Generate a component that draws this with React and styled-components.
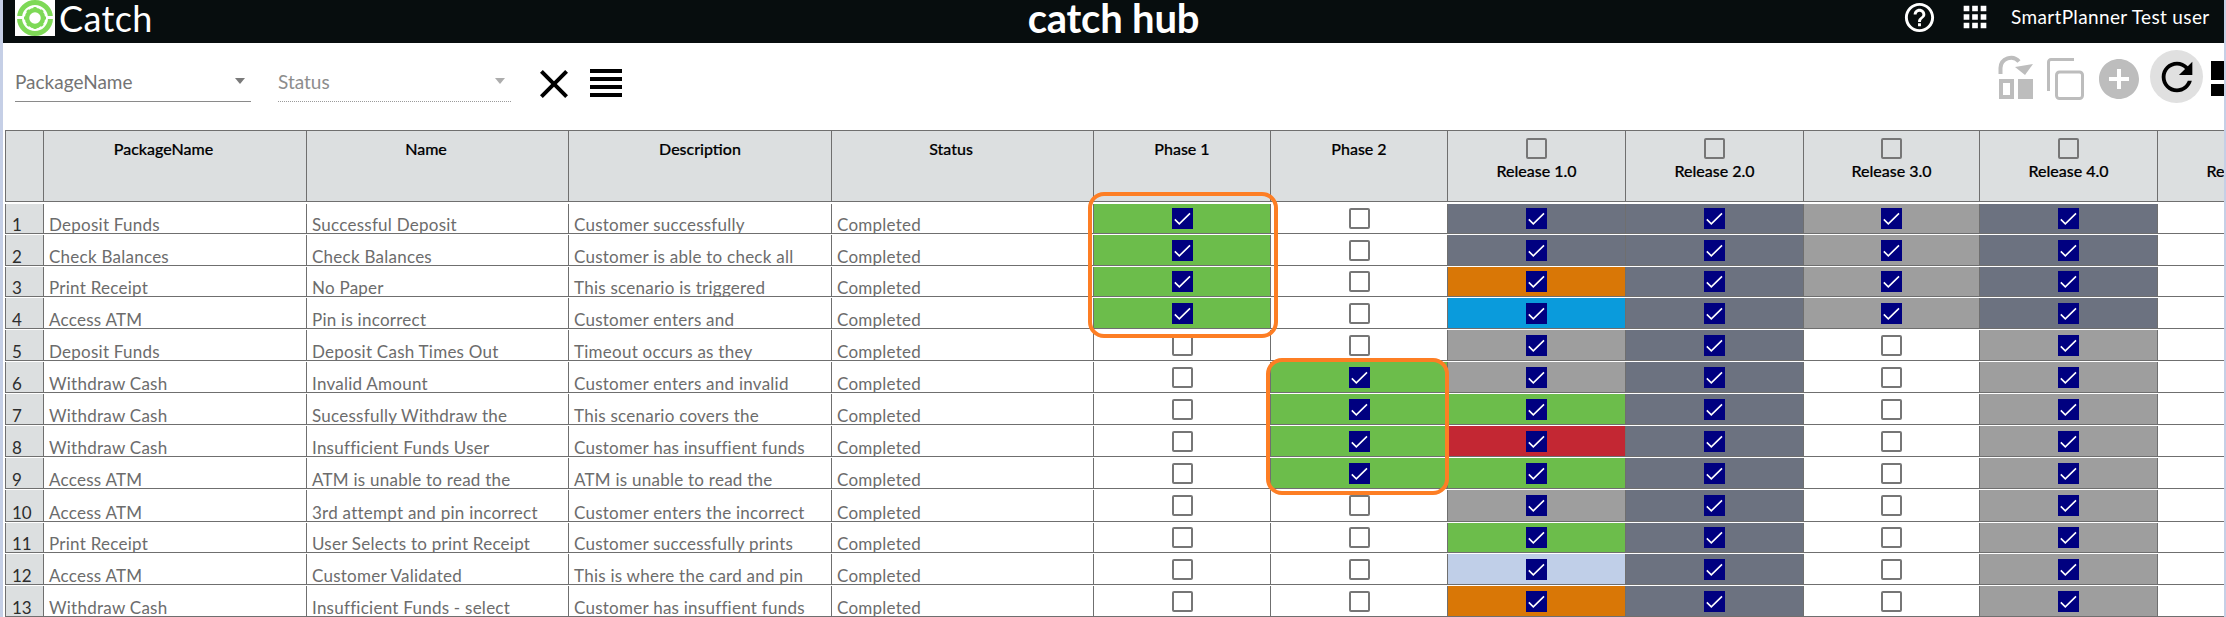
import React from "react";
import styled, { createGlobalStyle } from "styled-components";

const Global = createGlobalStyle`
  html, body { margin: 0; padding: 0; background: #c5cfe6; overflow: hidden; }
  * { box-sizing: border-box; }
`;

const FONT = `"Lato", "Noto Sans", sans-serif`;

const Page = styled.div`
  margin: 0 2px 0 3px;
  width: 2221px;
  height: 617px;
  background: #fff;
  overflow: hidden;
  font-family: ${FONT};
`;

const TopBar = styled.header`
  height: 43px;
  background: #070d0e;
  color: #fff;
  display: grid;
  grid-template-columns: 1fr auto 1fr;
  align-items: start;
  padding-left: 12px;
  overflow: hidden;
`;
const Brand = styled.div`
  display: flex;
  align-items: flex-start;
`;
const BrandName = styled.span`
  font-size: 36px;
  line-height: 36px;
  margin-left: 4px;
  letter-spacing: 0.4px;
`;
const HubTitle = styled.span`
  font-size: 40px;
  line-height: 36px;
  font-weight: 700;
  margin-left: -12px;
  letter-spacing: -0.2px;
`;
const TopActions = styled.div`
  display: flex;
  justify-content: flex-end;
  align-items: flex-start;
`;
const UserName = styled.span`
  font-size: 19px;
  line-height: 34px;
  white-space: nowrap;
  margin-left: 19px;
  width: 213px;
  overflow: hidden;
  letter-spacing: 0.35px;
`;

const Toolbar = styled.div`
  height: 87px;
  display: flex;
  align-items: flex-start;
  padding-left: 12px;
`;
const SelectBox = styled.div`
  width: ${(p) => p.$w}px;
  margin-right: ${(p) => p.$mr}px;
  margin-top: 25px;
  height: 34px;
  display: flex;
  align-items: flex-start;
  justify-content: space-between;
  padding-right: 6px;
  border-bottom: 1px ${(p) => (p.$disabled ? "dotted #9a9a9a" : "solid #8a8a8a")};
  color: ${(p) => (p.$disabled ? "#8d8d8d" : "#747474")};
  font-size: 19px;
  line-height: 28px;
`;
const Arrow = styled.span`
  width: 0;
  height: 0;
  margin-top: 10px;
  border-left: 5px solid transparent;
  border-right: 5px solid transparent;
  border-top: 6px solid ${(p) => (p.$disabled ? "#adadad" : "#7a7a7a")};
`;
const ToolIcon = styled.svg`
  flex: none;
  margin-top: ${(p) => p.$mt}px;
  margin-left: ${(p) => p.$ml || 0}px;
  fill: ${(p) => p.$color || "#000"};
`;
const RightTools = styled.div`
  margin-left: auto;
  display: flex;
  align-items: flex-start;
`;
const RefreshButton = styled.div`
  width: 53px;
  height: 53px;
  margin: 7px 0 0 7px;
  border-radius: 50%;
  background: #e0e0e0;
  display: flex;
  align-items: center;
  justify-content: center;
`;

const Table = styled.div`
  position: relative;
  margin-left: 2px;
  width: 2219px;
  overflow: hidden;
  height: 487px;
`;
const COLS = "38px 263px 262px 263px 262px 177px 177px 178px 178px 176px 178px 178px";
const HeaderRow = styled.div`
  display: grid;
  grid-template-columns: ${COLS};
  width: 2530px;
  height: 72px;
  border-top: 1px solid #6f6f6f;
  border-bottom: 1px solid #6f6f6f;
  background: #dcdfe0;
`;
const HeaderCell = styled.div`
  border-left: 1px solid #6f6f6f;
  display: flex;
  flex-direction: column;
  align-items: center;
  padding-top: ${(p) => (p.$box ? 7 : 8)}px;
  padding-right: ${(p) => p.$shift || 0}px;
  color: #000;
  font-size: 16px;
  line-height: 20px;
  font-weight: 500;
  -webkit-text-stroke: 0.2px #000;
  white-space: nowrap;
`;
const HeaderLabel = styled.span`
  margin-top: ${(p) => (p.$box ? 2 : 0)}px;
`;
const Row = styled.div`
  display: grid;
  grid-template-columns: ${COLS};
  width: 2530px;
  height: ${(p) => p.$h}px;
  padding-top: 1px;
  border-bottom: 1px solid #6f6f6f;
  &:nth-child(2) { padding-top: 2px; }
`;
const IndexCell = styled.div`
  border-left: 1px solid #6f6f6f;
  background: #dcdfe0;
  color: #2d2d2d;
  font-size: 17px;
  line-height: 17px;
  padding-left: 6px;
  display: flex;
  align-items: flex-end;
  overflow: hidden;
`;
const TextCell = styled.div`
  border-left: 1px solid #6f6f6f;
  color: #6c6c6c;
  font-size: 17px;
  line-height: 17px;
  letter-spacing: 0.25px;
  padding-left: 5px;
  display: flex;
  align-items: flex-end;
  white-space: nowrap;
  overflow: hidden;
`;
const MarkCell = styled.div`
  border-left: 1px solid #6f6f6f;
  background: ${(p) => p.$bg || "#fff"};
  display: flex;
  align-items: center;
  justify-content: center;
`;
const Box = styled.span`
  width: 21px;
  height: 21px;
  flex: none;
  border-radius: 2px;
  border: 2px solid #767676;
  background: transparent;
`;
const Checked = styled.span`
  width: 21px;
  height: 21px;
  flex: none;
  background: #000080;
  display: block;
  line-height: 0;
`;
const Highlight = styled.div`
  position: absolute;
  left: ${(p) => p.$x}px;
  top: ${(p) => p.$y}px;
  width: ${(p) => p.$w}px;
  height: ${(p) => p.$h}px;
  border: 4px solid #fd7e24;
  border-radius: 16px;
  pointer-events: none;
`;

const SLATE = "#6c7280", GRAY = "#9e9e9e", GREEN = "#6cbd4b", ORANGE = "#d97706", BLUE = "#0a9bdc", RED = "#c32733", LIGHT = "#c0cfe8";
const HEIGHTS = [32, 32, 31, 32, 32, 32, 32, 32, 32, 33, 31, 32, 32];
const R1 = [SLATE, SLATE, ORANGE, BLUE, GRAY, GRAY, GREEN, RED, GREEN, GRAY, GREEN, LIGHT, ORANGE];

const ROWS = [
  ["Deposit Funds", "Successful Deposit", "Customer successfully"],
  ["Check Balances", "Check Balances", "Customer is able to check all"],
  ["Print Receipt", "No Paper", "This scenario is triggered"],
  ["Access ATM", "Pin is incorrect", "Customer enters and"],
  ["Deposit Funds", "Deposit Cash Times Out", "Timeout occurs as they"],
  ["Withdraw Cash", "Invalid Amount", "Customer enters and invalid"],
  ["Withdraw Cash", "Sucessfully Withdraw the", "This scenario covers the"],
  ["Withdraw Cash", "Insufficient Funds User", "Customer has insuffient funds"],
  ["Access ATM", "ATM is unable to read the", "ATM is unable to read the"],
  ["Access ATM", "3rd attempt and pin incorrect", "Customer enters the incorrect"],
  ["Print Receipt", "User Selects to print Receipt", "Customer successfully prints"],
  ["Access ATM", "Customer Validated", "This is where the card and pin"],
  ["Withdraw Cash", "Insufficient Funds - select", "Customer has insuffient funds"],
];

const Mark = ({ on, bg }) => (
  <MarkCell $bg={bg}>
    {on ? (
      <Checked>
        <svg width="21" height="21" viewBox="0 0 21 21">
          <path d="M2.8 11.4 7.3 15.8 18 5.4" fill="none" stroke="#fff" strokeWidth="1.6" />
        </svg>
      </Checked>
    ) : (
      <Box />
    )}
  </MarkCell>
);

const Logo = () => (
  <svg width="40" height="36" viewBox="0 0 40 36" style={{ flex: "none", display: "block" }}>
    <rect width="40" height="36" fill="#fff" />
    <circle cx="20" cy="18" r="15.5" fill="none" stroke="#7ed957" strokeWidth="5" />
    <rect x="0" y="16" width="8" height="3" fill="#fff" />
    <rect x="32" y="16" width="8" height="3" fill="#fff" />
    <circle cx="20" cy="18" r="8" fill="none" stroke="#7ed957" strokeWidth="4.5" />
    <path d="M20 7v4M20 25v4M9 18h4M27 18h4M12.3 10.3l2.8 2.8M24.9 22.9l2.8 2.8M27.7 10.3l-2.8 2.8M15.1 22.9l-2.8 2.8" stroke="#7ed957" strokeWidth="3" />
  </svg>
);

export default function App() {
  return (
    <Page>
      <Global />
      <TopBar>
        <Brand>
          <Logo />
          <BrandName>Catch</BrandName>
        </Brand>
        <HubTitle>catch hub</HubTitle>
        <TopActions>
          <ToolIcon as="svg" width="35" height="35" viewBox="0 0 24 24" $mt={0} $color="#fff">
            <path d="M11 18h2v-2h-2v2zm1-16C6.48 2 2 6.48 2 12s4.48 10 10 10 10-4.48 10-10S17.52 2 12 2zm0 18c-4.41 0-8-3.59-8-8s3.59-8 8-8 8 3.59 8 8-3.59 8-8 8zm0-14c-2.21 0-4 1.79-4 4h2c0-1.1.9-2 2-2s2 .9 2 2c0 2-3 1.75-3 5h2c0-2.25 3-2.5 3-5 0-2.21-1.79-4-4-4z" />
          </ToolIcon>
          <ToolIcon as="svg" width="34" height="34" viewBox="0 0 24 24" $mt={0} $ml={21} $color="#fff">
            <path d="M4 8h4V4H4v4zm6 12h4v-4h-4v4zm-6 0h4v-4H4v4zm0-6h4v-4H4v4zm6 0h4v-4h-4v4zm6-10v4h4V4h-4zm-6 4h4V4h-4v4zm6 6h4v-4h-4v4zm0 6h4v-4h-4v4z" />
          </ToolIcon>
          <UserName>SmartPlanner Test user</UserName>
        </TopActions>
      </TopBar>

      <Toolbar>
        <SelectBox $w={236} $mr={27}>
          PackageName
          <Arrow />
        </SelectBox>
        <SelectBox $w={233} $mr={19} $disabled>
          Status
          <Arrow $disabled />
        </SelectBox>
        <ToolIcon width="48" height="48" viewBox="0 0 24 24" $mt={17}>
          <path d="M19 6.41L17.59 5 12 10.59 6.41 5 5 6.41 10.59 12 5 17.59 6.41 19 12 13.41 17.59 19 19 17.59 13.41 12z" />
        </ToolIcon>
        <ToolIcon width="48" height="48" viewBox="0 0 24 24" $mt={16} $ml={4}>
          <path d="M4 15h16v-2H4v2zm0 4h16v-2H4v2zm0-8h16V9H4v2zm0-6v2h16V5H4z" />
        </ToolIcon>
        <RightTools>
          <ToolIcon width="36" height="44" viewBox="0 0 36 44" $mt={12} $color="#bdbdbd">
            <path d="M1 44V24h15v20H1zm4-4h7V28H5v12zM20 24h15v20H20z" />
            <path d="M2.5 19v-6A10.5 10.5 0 0 1 21 6.5" fill="none" stroke="#bdbdbd" strokeWidth="4" />
            <path d="M35 9 27 20 17 12z" />
          </ToolIcon>
          <ToolIcon width="37" height="42" viewBox="0 0 37 42" $mt={15} $ml={13} $color="none">
            <path d="M1.5 33V4A2.5 2.5 0 0 1 4 1.500h23" fill="none" stroke="#bdbdbd" strokeWidth="3" />
            <rect x="9.500" y="14" width="26" height="26.500" rx="3" fill="none" stroke="#bdbdbd" strokeWidth="3" />
          </ToolIcon>
          <ToolIcon width="48" height="48" viewBox="0 0 24 24" $mt={12} $ml={11} $color="#bdbdbd">
            <path d="M12 2C6.48 2 2 6.48 2 12s4.48 10 10 10 10-4.48 10-10S17.520 2 12 2zm5 11h-4v4h-2v-4H7v-2h4V7h2v4h4v2z" />
          </ToolIcon>
          <RefreshButton>
            <svg width="46" height="46" viewBox="0 0 24 24">
              <path d="M17.65 6.35C16.2 4.9 14.21 4 12 4c-4.42 0-7.99 3.58-7.99 8s3.57 8 7.99 8c3.73 0 6.84-2.55 7.73-6h-2.08c-.82 2.33-3.04 4-5.65 4-3.31 0-6-2.69-6-6s2.69-6 6-6c1.66 0 3.14.69 4.22 1.78L13 11h7V4l-2.35 2.35z" />
            </svg>
          </RefreshButton>
          <ToolIcon width="13" height="36" viewBox="0 0 13 36" $mt={18} $ml={8}>
            <path d="M0 0h13v19H0zM0 23h13v12H0z" />
          </ToolIcon>
        </RightTools>
      </Toolbar>

      <Table>
        <HeaderRow>
          <HeaderCell />
          <HeaderCell $shift={23}>PackageName</HeaderCell>
          <HeaderCell $shift={23}>Name</HeaderCell>
          <HeaderCell>Description</HeaderCell>
          <HeaderCell $shift={23}>Status</HeaderCell>
          <HeaderCell>Phase 1</HeaderCell>
          <HeaderCell>Phase 2</HeaderCell>
          {["1.0", "2.0", "3.0", "4.0", "5.0"].map((v) => (
            <HeaderCell key={v} $box>
              <Box />
              <HeaderLabel $box>Release {v}</HeaderLabel>
            </HeaderCell>
          ))}
        </HeaderRow>
        {ROWS.map((r, i) => (
          <Row key={i} $h={HEIGHTS[i]}>
            <IndexCell>{i + 1}</IndexCell>
            <TextCell>{r[0]}</TextCell>
            <TextCell>{r[1]}</TextCell>
            <TextCell>{r[2]}</TextCell>
            <TextCell>Completed</TextCell>
            <Mark on={i < 4} bg={i < 4 ? GREEN : undefined} />
            <Mark on={i >= 5 && i < 9} bg={i >= 5 && i < 9 ? GREEN : undefined} />
            <Mark on bg={R1[i]} />
            <Mark on bg={SLATE} />
            <Mark on={i < 4} bg={i < 4 ? GRAY : undefined} />
            <Mark on bg={i < 4 ? SLATE : GRAY} />
            <MarkCell />
          </Row>
        ))}
        <Highlight $x={1083} $y={62} $w={190} $h={146} />
        <Highlight $x={1261} $y={228} $w={183} $h={137} />
      </Table>
    </Page>
  );
}
